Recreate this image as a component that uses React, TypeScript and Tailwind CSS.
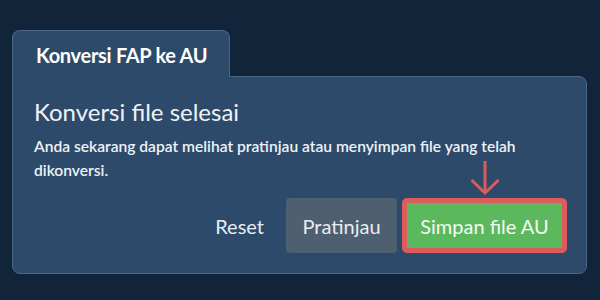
import React from "react";

export default function App() {
  return (
    <div
      className="w-[600px] h-[300px] bg-[#11243a] pt-[30px] pl-[12px] pr-[13px]"
      style={{ fontFamily: "Lato, 'Noto Sans', sans-serif" }}
    >
      <div className="flex flex-col">
        <div className="relative z-10 -mb-px w-[218px] h-[47px] rounded-t-[8px] border border-b-0 border-[#4a6785] bg-[#2d4a6a] pl-[23px] pt-[12px]">
          <span className="block text-[20px] leading-[24px] font-bold text-white tracking-[-0.3px]">
            Konversi FAP ke AU
          </span>
        </div>
        <div className="relative h-[198px] rounded-b-[8px] rounded-tr-[8px] border border-[#4a6785] bg-[#2d4a6a] pl-[21px] pr-[19px] pt-[20px]">
          <h1 className="text-[24px] leading-[29px] font-normal text-[#eef2f6]">
            Konversi file selesai
          </h1>
          <p className="mt-[8px] text-[15.6px] leading-[24px] font-semibold text-[#eef2f6]">
            Anda sekarang dapat melihat pratinjau atau menyimpan file yang telah dikonversi.
          </p>
          <div className="mt-[16px] flex justify-end items-center">
            <button className="h-[55px] px-[16px] mr-[6px] text-[20px] text-[#e8edf2] font-normal">
              Reset
            </button>
            <button className="h-[55px] w-[111px] rounded-[4px] bg-[#4e5f70] text-[20px] text-[#e8edf2] font-normal">
              Pratinjau
            </button>
            <div className="relative ml-[5px]">
              <svg
                className="absolute left-1/2 -translate-x-1/2 top-[-38px]"
                width="32"
                height="36"
                viewBox="0 0 32 36"
                fill="none"
              >
                <path d="M16 1 V33" stroke="#de5b5b" strokeWidth="3" />
                <path d="M2.5 20 L16 33 L29.5 20" stroke="#de5b5b" strokeWidth="3" strokeLinejoin="miter" />
              </svg>
              <button className="h-[55px] w-[165px] rounded-[5px] border-[5px] border-[#de5b5b] bg-[#5cb85c] text-[20px] text-[#f4fbf4] font-normal">
                Simpan file AU
              </button>
            </div>
          </div>
        </div>
      </div>
    </div>
  );
}
